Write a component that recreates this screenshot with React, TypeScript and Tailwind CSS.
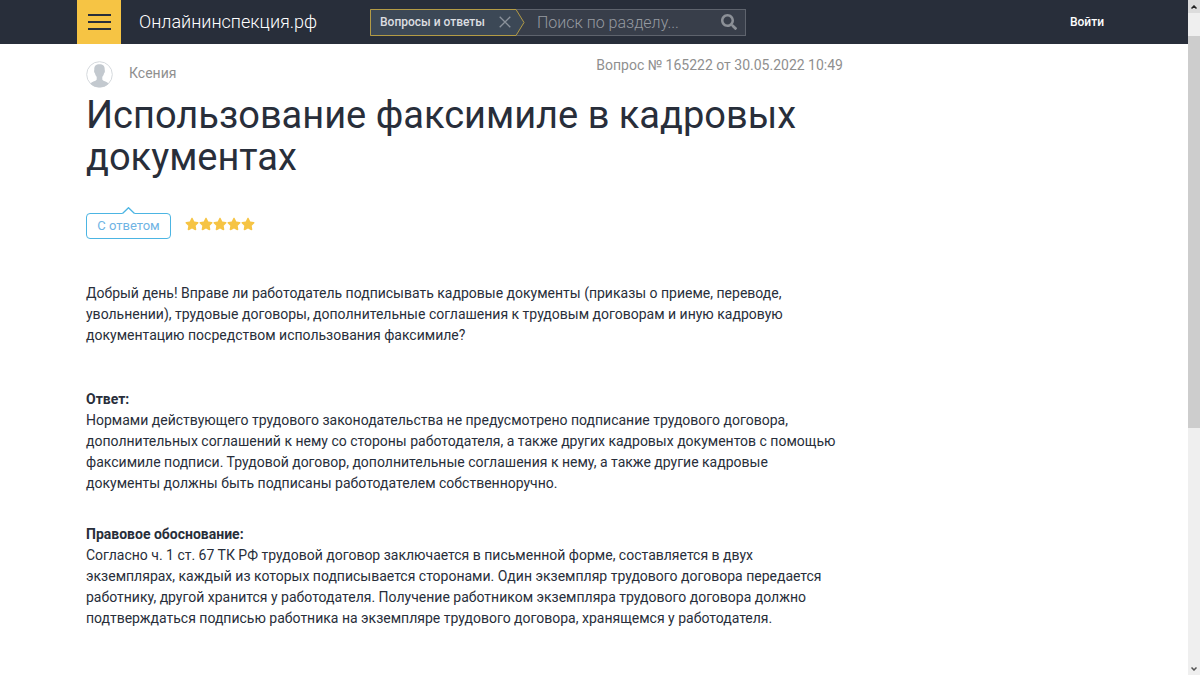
import { FaSearch, FaStar } from "react-icons/fa";

const question = [
  "Добрый день! Вправе ли работодатель подписывать кадровые документы (приказы о приеме, переводе,",
  "увольнении), трудовые договоры, дополнительные соглашения к трудовым договорам и иную кадровую",
  "документацию посредством использования факсимиле?",
];

const answer = [
  "Нормами действующего трудового законодательства не предусмотрено подписание трудового договора,",
  "дополнительных соглашений к нему со стороны работодателя, а также других кадровых документов с помощью",
  "факсимиле подписи. Трудовой договор, дополнительные соглашения к нему, а также другие кадровые",
  "документы должны быть подписаны работодателем собственноручно.",
];

const legal = [
  "Согласно ч. 1 ст. 67 ТК РФ трудовой договор заключается в письменной форме, составляется в двух",
  "экземплярах, каждый из которых подписывается сторонами. Один экземпляр трудового договора передается",
  "работнику, другой хранится у работодателя. Получение работником экземпляра трудового договора должно",
  "подтверждаться подписью работника на экземпляре трудового договора, хранящемся у работодателя.",
];

const Lines = ({ lines }: { lines: string[] }) => (
  <p>
    {lines.map((line) => (
      <span key={line} className="block">
        {line}
      </span>
    ))}
  </p>
);

const SearchBar = () => {
  return (
    <form className="flex h-[27px] w-[376px] border border-[#5e636d] bg-[#383e4a]">
      <div className="relative -my-px -ml-px flex w-[155px] shrink-0 items-center justify-between pr-[14px] pl-[10px]">
        <svg
          className="absolute inset-0"
          width="155"
          height="27"
          viewBox="0 0 155 27"
          fill="#3c4856"
          stroke="#b39b45"
          aria-hidden="true"
        >
          <path d="M.5.5H146L154 13.5L146 26.5H.5Z" />
        </svg>
        <span className="relative text-xs font-medium whitespace-nowrap text-[#dcdee1]">
          Вопросы и ответы
        </span>
        <button type="button" aria-label="Убрать раздел" className="relative">
          <svg width="12" height="12" viewBox="0 0 12 12" stroke="#8b929b" strokeWidth="1.3">
            <path d="M.7.7L11.3 11.3M11.3.7L.7 11.3" />
          </svg>
        </button>
      </div>
      <input
        type="text"
        aria-label="Поиск по разделу"
        placeholder="Поиск по разделу..."
        className="min-w-0 grow bg-transparent pt-[2px] pl-3 text-base font-light text-white outline-none placeholder:text-[#969aa1]"
      />
      <button type="submit" aria-label="Найти" className="px-2 text-[#8c9097]">
        <FaSearch size={16} />
      </button>
    </form>
  );
};

const Header = () => {
  return (
    <header className="bg-[#282e3a]">
      <div className="mx-auto flex h-11 max-w-[1034px] items-center">
        <button
          type="button"
          aria-label="Меню"
          className="flex h-11 w-11 shrink-0 flex-col items-center justify-center gap-[5px] bg-[#f6c444]"
        >
          <span className="h-[2px] w-[23px] bg-[#282e3a]" />
          <span className="h-[2px] w-[23px] bg-[#282e3a]" />
          <span className="h-[2px] w-[23px] bg-[#282e3a]" />
        </button>
        <a href="#" className="w-[249px] pl-[18px] text-lg font-light text-white">
          Онлайнинспекция.рф
        </a>
        <SearchBar />
        <a href="#" className="mr-[7px] ml-auto text-xs font-medium text-white">
          Войти
        </a>
      </div>
    </header>
  );
};

const Avatar = () => {
  return (
    <svg width="27" height="27" viewBox="0 0 27 27" aria-hidden="true">
      <circle cx="13.5" cy="13.5" r="12.8" fill="#fff" stroke="#d5d9dd" />
      <path
        fill="#c3c9cf"
        d="M13.5 3.3c3.6 0 5.4 1.8 5.2 5.2 0 1 .4 1 .1 2.400c-.2.9-.7 1-.9 1.900c-.3 1.500-.9 2.300-1.600 3v2.800c.3 1.500 4.700 2 6.400 4.200A12.800 12.800 0 0 1 13.500 26.300A12.800 12.800 0 0 1 4.300 22.800C6 20.600 10.400 20.100 10.700 18.600v-2.800c-.7-.7-1.300-1.500-1.600-3c-.2-.9-.7-1-.9-1.900c-.3-1.400.1-1.400.1-2.400c-.2-3.400 1.600-5.200 5.200-5.200z"
      />
    </svg>
  );
};

const Article = () => {
  return (
    <main className="mx-auto max-w-[1034px] px-[9px] text-[#282e3a]">
      <div className="flex max-w-[757px] justify-between pt-[11px] text-sm text-[#8f8f8f]">
        <div className="flex items-center pt-[6px]">
          <Avatar />
          <span className="pb-[3px] pl-4">Ксения</span>
        </div>
        <span>Вопрос № 165222 от 30.05.2022 10:49</span>
      </div>
      <h1 className="mt-[6px] max-w-[757px] text-[38px] leading-[42px]">
        Использование факсимиле в кадровых документах
      </h1>
      <div className="mt-[35px] flex items-center gap-[14px]">
        <div className="relative flex h-[26px] w-[85px] items-center justify-center rounded-[4px] border border-[#4cb5e3] text-[13px] text-[#6fb4e4]">
          <svg
            className="absolute -top-[7px] left-[35px]"
            width="13"
            height="8"
            viewBox="0 0 13 8"
            aria-hidden="true"
          >
            <path d="M.5 6.500L6.500.700L12.500 6.500V8H.5Z" fill="#fff" />
            <path d="M.5 6.500L6.500.700L12.500 6.500" fill="none" stroke="#4cb5e3" strokeWidth="1.300" />
          </svg>
          С ответом
        </div>
        <div className="flex pb-1 text-[#f6c444]" role="img" aria-label="Оценка 5 из 5">
          {[1, 2, 3, 4, 5].map((star) => (
            <FaStar key={star} size={14} />
          ))}
        </div>
      </div>
      <div className="pt-11 pb-12 text-sm leading-[21px]">
        <Lines lines={question} />
        <h2 className="mt-[43px] font-bold">Ответ:</h2>
        <Lines lines={answer} />
        <h2 className="mt-[30px] font-bold">Правовое обоснование:</h2>
        <Lines lines={legal} />
      </div>
    </main>
  );
};

const ScrollTrack = () => {
  return (
    <div
      className="sticky top-0 flex h-screen w-3 shrink-0 flex-col items-center bg-[#efefef]"
      aria-hidden="true"
    >
      <div className="flex h-[13px] w-full items-center justify-center bg-[#dcdcdc]">
        <svg width="6" height="4" viewBox="0 0 6 4" fill="none" stroke="#222" strokeWidth="1.500">
          <path d="M.5 3.500L3 1L5.500 3.500" />
        </svg>
      </div>
      <div className="h-[23px]" />
      <div className="h-[58%] w-full bg-[#cdcdcd]" />
      <div className="mt-auto pb-1">
        <svg width="6" height="4" viewBox="0 0 6 4" fill="none" stroke="#555" strokeWidth="1.500">
          <path d="M.5.5L3 3L5.500.5" />
        </svg>
      </div>
    </div>
  );
};

const App = () => {
  return (
    <div className="flex min-h-screen bg-white font-[Roboto,sans-serif]">
      <div className="min-w-0 grow">
        <Header />
        <Article />
      </div>
      <ScrollTrack />
    </div>
  );
};

export default App;
